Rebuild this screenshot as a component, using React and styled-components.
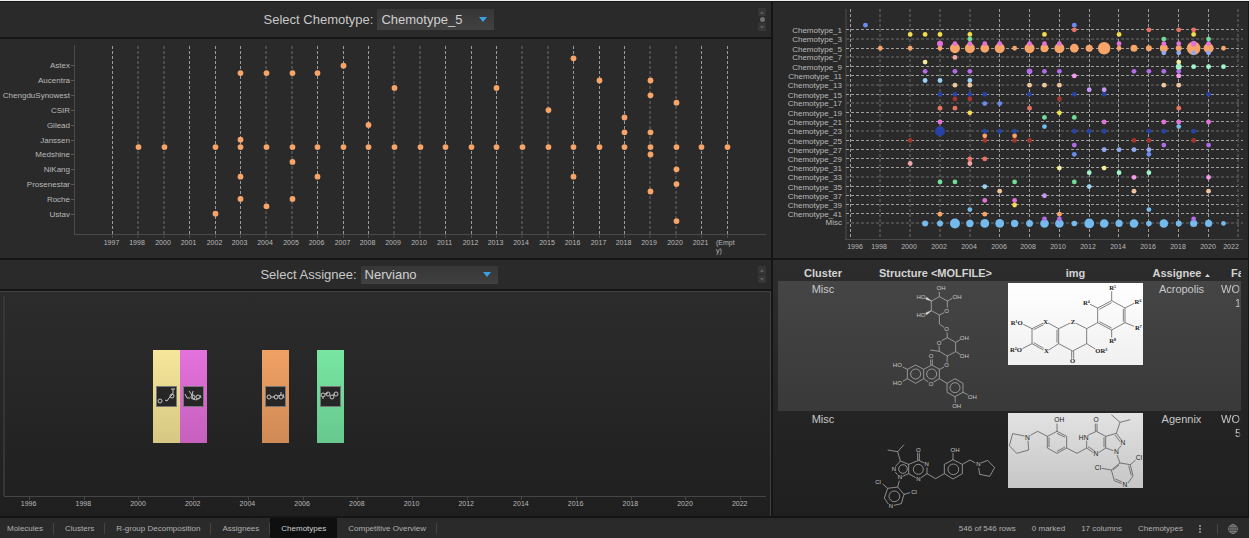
import React from "react";
import styled, { createGlobalStyle } from "styled-components";

const assigneeRows = [
  "Astex",
  "Aucentra",
  "ChengduSynowest",
  "CSIR",
  "Gilead",
  "Janssen",
  "Medshine",
  "NiKang",
  "Prosenestar",
  "Roche",
  "Ustav",
];

// whole numbers fall between two pixels and get the wide, dim line
const assigneeCols = [
  ["1997", 112.5],
  ["1998", 138],
  ["2000", 164],
  ["2001", 189.5],
  ["2002", 215.5],
  ["2003", 240.5],
  ["2004", 266],
  ["2005", 292],
  ["2006", 317.5],
  ["2007", 343.5],
  ["2008", 368.5],
  ["2009", 394],
  ["2010", 420],
  ["2011", 445.5],
  ["2012", 471.5],
  ["2013", 496.5],
  ["2014", 522],
  ["2015", 548],
  ["2016", 573.5],
  ["2017", 599.5],
  ["2018", 624.5],
  ["2019", 650],
  ["2020", 676],
  ["2021", 701.5],
  ["Empty", 727.5],
];

// one entry for each half row, from the top
const assigneeDots = [
  "2016",
  "2007",
  "2003 2004 2005 2006",
  "2017 2019",
  "2009 2013",
  "2019",
  "2020",
  "2015",
  "2018",
  "2008",
  "2018 2019",
  "2003",
  "1998 2000 2002 2003 2004 2005 2006 2007 2008 2009 2010 2011 2012 2013 2014 2015 2016 2017 2018 2019 2020 2021 Empty",
  "2019",
  "2005",
  "2020",
  "2003 2006 2016",
  "2020",
  "2019",
  "2003 2005",
  "2004",
  "2002",
  "2020",
];

const c = {
  orange: "#f7a468",
  blue: "#6b8bf0",
  red: "#ea7262",
  yellow: "#f3dc50",
  green: "#72de9a",
  magenta: "#e272da",
  peri: "#92a8f2",
  rose: "#f2a6a6",
  paleYellow: "#f5ec98",
  mint: "#a2f5ca",
  purple: "#b56cea",
  pink: "#f29cea",
  lightBlue: "#9ad2f5",
  peach: "#f2c49c",
  lilac: "#c598f2",
  navy: "#2843a6",
  brick: "#a3352b",
  sky: "#74baec",
};

const chemotypeCols = [
  [1996, 77.5, 82],
  [1998, 107, 106],
  [2000, 137, 136],
  [2002, 167, 166],
  [2004, 197, 196],
  [2006, 226.5, 226],
  [2008, 256.5, 255],
  [2010, 286.5, 285],
  [2012, 316.5, 315],
  [2014, 345.5, 345],
  [2016, 375.5, 375],
  [2018, 405.5, 405],
  [2020, 435.5, 435],
  [2022, 465, 458],
];

const chemotypeRows = [
  27.5, 37, 46.5, 55, 64.5, 73.5, 83, 92.5, 101, 110.5, 119.5, 129, 138.5,
  147.5, 156.5, 165.5, 175, 184.5, 193.5, 202.5, 211.5, 221,
];

// [row, colour, years], a year is "yy" or "yy:radius"
const chemotypeDots = [
  [5, c.orange, "98 00 02 03:5 04:5 05:4.4 06:5 07 08:5 09:4 10:5 11:4.4 12:3.6 13:6.2 14 15:3.5 16:3 17:4 18:3 19:6.8 20:5 21"],
  [43, c.sky, "01:3 02:3 03:5 04:3.7 05:4.4 06:4.4 07:3.7 08:3.4 09:4.3 10:4.3 11:2.8 12:4.9 13:4.3 14:3.6 15:4.3 16:2.8 17:4.3 18:3 19:3.6 20:3.6 21"],
  [0, c.blue, "97 11"],
  [1, c.red, "11 16 18 19"],
  [2, c.yellow, "00 01 02 04 09 14 19"],
  [3, c.green, "04 17 20"],
  [4, c.magenta, "02:3 03 04 05 06 08 09 10 14 17 18 19:2.8 20"],
  [6, c.peri, "17 18 19 20"],
  [7, c.rose, "03"],
  [8, c.paleYellow, "01 18"],
  [10, c.purple, "01 03 04 08:2.8 09 10 15 16 17 18"],
  [9, c.mint, "18:3 19 20 21"],
  [11, c.pink, "11 18"],
  [12, c.lightBlue, "01 02 04"],
  [13, c.peach, "03 04 08 09 10 17 18"],
  [14, c.lilac, "12 13"],
  [15, c.navy, "02 03 04 05 08 11 13 20"],
  [16, c.brick, "03 04 10"],
  [17, c.blue, "05 06"],
  [18, c.red, "02 03 08 18"],
  [19, c.yellow, "04 10"],
  [20, c.green, "09 11"],
  [21, c.magenta, "02 13 17 18 20"],
  [22, c.sky, "09 18"],
  [23, c.navy, "02:5 05 06 07 11 12 13 16 17 19"],
  [24, c.orange, "05 07"],
  [25, c.brick, "00 05 07 08 15 16 19"],
  [26, c.purple, "11 17 20"],
  [27, c.peri, "13 14 15 16"],
  [28, c.blue, "11 16"],
  [29, c.red, "04 05"],
  [30, c.rose, "00 04"],
  [31, c.paleYellow, "10 13"],
  [32, c.mint, "12 14 16"],
  [33, c.pink, "15 20"],
  [34, c.green, "02 03 07 11"],
  [35, c.lightBlue, "05 12"],
  [36, c.peach, "06 15 20"],
  [37, c.lilac, "09"],
  [38, c.magenta, "05 07"],
  [39, c.yellow, "07"],
  [40, c.sky, "04 16"],
  [41, c.orange, "02 05 10"],
  [42, c.purple, "09 10 19"],
];

const bars = [
  {
    x: 153,
    from: "#f6e69a",
    to: "#d6c883",
    d: "M6 15h0M9 14l2 1 2-3M13 12l3-3 1-2M15 3h4M17 3v4",
    rings: [[4, 15], [16, 10]],
  },
  {
    x: 180,
    from: "#e472dc",
    to: "#c660bd",
    d: "M2 8l2 4h3M6 5l3 4 1-4M9 9l1 4 3 1 3-2M17 9l1 3",
    rings: [[10, 11], [15, 11]],
  },
  {
    x: 262,
    from: "#f0a165",
    to: "#d08a55",
    d: "M6 11h4M13 10l3-1M16 6v3M18 8l1 4",
    rings: [[4, 11], [11, 11], [16, 11]],
  },
  {
    x: 317,
    from: "#78e6a2",
    to: "#67c88e",
    d: "M3 10v3M5 8l3-1M13 9l2-1",
    rings: [[3, 9], [8, 8], [12, 11], [16, 8]],
  },
];

const App = () => {
  return (
    <>
      <GlobalStyle />
      <Page>
        <Panels>
          <Column>
            <SelectBar
              id="chemotype"
              label="Select Chemotype:"
              value="Chemotype_5"
              width={117}
              thumb
            />
            <Panel>
              <AssigneeChart />
            </Panel>
          </Column>
          <Panel>
            <ChemotypeChart />
          </Panel>
          <Column>
            <SelectBar
              id="assignee"
              label="Select Assignee:"
              value="Nerviano"
              width={137}
            />
            <Panel $framed>
              <TimelineChart />
            </Panel>
          </Column>
          <Panel $shaded>
            <StructureTable />
          </Panel>
        </Panels>
        <StatusBar />
      </Page>
    </>
  );
};

const SelectBar = ({ id, label, value, width, thumb }) => (
  <Bar $tall={thumb}>
    <BarMain>
      <label htmlFor={id}>{label}</label>
      <SelectBox $width={width} $tall={thumb}>
        <select id={id} defaultValue={value}>
          <option>{value}</option>
        </select>
        <svg width="8" height="5" viewBox="0 0 8 5">
          <path d="M0 0h8L4 5z" fill="#3aa0e6" />
        </svg>
      </SelectBox>
    </BarMain>
    <Stepper>
      <button type="button" aria-label="Previous">
        <svg width="4" height="3" viewBox="0 0 4 3">
          <path d="M0 3L2 0l2 3z" />
        </svg>
      </button>
      {thumb && <Thumb />}
      <button type="button" aria-label="Next">
        <svg width="4" height="3" viewBox="0 0 4 3">
          <path d="M0 0h4L2 3z" />
        </svg>
      </button>
    </Stepper>
  </Bar>
);

const GridLine = ({ x, y, from, to }) => {
  const wide = Number.isInteger(x ?? y);
  const ends =
    x !== undefined
      ? { x1: x, x2: x, y1: from, y2: to }
      : { x1: from, x2: to, y1: y, y2: y };
  return (
    <line
      {...ends}
      stroke={wide ? "#4b4b4b" : "#9c9c9c"}
      strokeWidth={wide ? 2 : 1}
      strokeDasharray="3 2"
    />
  );
};

const AssigneeChart = () => {
  const colX = Object.fromEntries(assigneeCols);
  return (
    <Chart viewBox="0 0 771 219" role="img" aria-label="Assignees by year">
      <path d="M74.5 6v189.500H766" fill="none" stroke="#4a4a4a" />
      {assigneeCols.map(([year, x]) => (
        <g key={year}>
          <GridLine x={x} from={7} to={195} />
          <path d={`M${x} 196v3`} stroke="#4a4a4a" />
          {year === "Empty" ? (
            <text x="716" y="206">
              (Empt
              <tspan x="716" dy="8">
                y)
              </tspan>
            </text>
          ) : (
            <text x={x - 1} y="206" textAnchor="middle">
              {year}
            </text>
          )}
        </g>
      ))}
      {assigneeRows.map((name, i) => {
        const y = 26.4 + i * 14.84;
        return (
          <g key={name}>
            <path d={`M71 ${Math.round(y)}.5h3`} stroke="#5a5a5a" />
            <RowLabel x="70" y={y + 3} textAnchor="end">
              {name}
            </RowLabel>
          </g>
        );
      })}
      {assigneeDots.map((years, i) =>
        years
          .split(" ")
          .map((year) => (
            <circle
              key={i + year}
              cx={Math.floor(colX[year]) + 0.5}
              cy={19.3 + i * 7.4}
              r="2.9"
              fill={c.orange}
            />
          ))
      )}
    </Chart>
  );
};

const ChemotypeChart = () => (
  <Chart viewBox="0 0 475 256" role="img" aria-label="Chemotypes by year">
    <path d="M73 7v230" stroke="#3c3c3c" strokeWidth="2" />
    <path d="M72 237.500H470" stroke="#4a4a4a" />
    {chemotypeRows.map((y, i) => (
      <g key={y}>
        <GridLine y={y} from={73} to={470} />
        <RowLabel x="69" y={y + (i === 21 ? 2 : 3)} textAnchor="end">
          {i === 21 ? "Misc" : `Chemotype_${i * 2 + 1}`}
        </RowLabel>
      </g>
    ))}
    {chemotypeCols.map(([year, x, labelX]) => (
      <g key={year}>
        <GridLine x={x} from={7} to={237} />
        <text x={labelX} y="247" textAnchor="middle">
          {year}
        </text>
      </g>
    ))}
    {chemotypeDots.map(([row, fill, years]) =>
      years.split(" ").map((item) => {
        const [yy, r = 2.4] = item.split(":");
        const offset = yy > 90 ? yy - 96 : Number(yy) + 4;
        return (
          <circle
            key={row + item}
            cx={77.5 + offset * 14.92}
            cy={23.2 + row * 4.61}
            r={r}
            fill={fill}
          />
        );
      })
    )}
  </Chart>
);

const TimelineChart = () => (
  <Chart viewBox="0 0 770 223" role="img" aria-label="Structures by year">
    <path d="M4 4v200" stroke="#363636" strokeWidth="2" />
    <path d="M4 204.500H766" stroke="#454545" />
    {Array.from({ length: 14 }, (_, i) => (
      <g key={i}>
        <path
          d={`M${Math.round(29 + i * 54.7)}.5 205v3`}
          stroke="#454545"
        />
        <text x={28.6 + i * 54.7} y="214" textAnchor="middle">
          {1996 + i * 2}
        </text>
      </g>
    ))}
    {bars.map(({ x, from, to, d, rings }) => (
      <g key={x}>
        <linearGradient id={`bar${x}`} x2="0" y2="1">
          <stop stopColor={from} />
          <stop offset="1" stopColor={to} />
        </linearGradient>
        <rect x={x} y="58" width="27" height="93" fill={`url(#bar${x})`} />
        <svg x={x + 3} y="94" width="21" height="21">
          <rect
            x="0.5"
            y="0.5"
            width="20"
            height="20"
            fill="#262626"
            stroke="#777"
          />
          <g fill="none" stroke="#c4c4c4">
            <path d={d} />
            {rings.map(([cx, cy]) => (
              <circle key={cx} cx={cx} cy={cy} r="2" />
            ))}
          </g>
        </svg>
      </g>
    ))}
  </Chart>
);

const Atoms = ({ items }) =>
  items.map(([text, x, y]) => (
    <text key={text + x + y} x={x} y={y + 6} textAnchor="middle">
      {text}
    </text>
  ));

const Glycoside = () => (
  <Molecule viewBox="294 63 405 387" $height={129}>
    <path d="M508 107L532 120V140M522 155L508 162 484 149V120L508 107V92M532 120L547 112M508 162V189L522 199M531 214L532 230 557 244V272L532 285 508 271 507 254M515 239L532 230M508 271L481 267M557 244L571 236M557 272L571 280M532 285L531 304M522 318L509 325 485 312 461 325V353L475 363M491 363L508 353V325M482 312V295M487 312V295M461 325L437 312 412 325V353L437 367 461 353M412 325L398 318M412 353L398 361M508 353L531 367 555 353 579 367V394L555 407 531 394V367M579 394L593 401M555 407L556 425" />
    <path d="M484 120L470 109 467 114zM484 149L467 156 470 161z" fill="#eee" />
    <circle cx="437" cy="339" r="15" />
    <circle cx="485" cy="339" r="15" />
    <circle cx="555" cy="380" r="15" />
    <Atoms
      items={[
        ["OH", 513, 82],
        ["HO", 453, 109],
        ["OH", 561, 109],
        ["O", 530, 149],
        ["HO", 453, 163],
        ["O", 530, 204],
        ["OH", 583, 231],
        ["O", 507, 245],
        ["OH", 583, 285],
        ["O", 483, 286],
        ["O", 530, 313],
        ["HO", 382, 313],
        ["HO", 382, 367],
        ["O", 483, 368],
        ["OH", 607, 407],
        ["OH", 560, 435],
      ]}
    />
  </Molecule>
);

const Pyrazole = () => (
  <Molecule viewBox="294 33 405 312" $height={104}>
    <path d="M353 147L383 152 402 131M383 152L391 180 416 190V218L398 226M382 221L376 213M376 197L391 180M416 190L446 178 463 186M471 199V218L453 230M437 230L416 218M443 178V155M448 178V155M471 218L497 233 523 218V190L549 176 577 190V218L549 234 523 218M549 176V156M577 190L600 177 616 186M633 186L653 178 674 200 659 226 629 220 626 200M388 239L383 258 402 280 394 308 372 313M355 309L343 291 353 262 383 258M353 262L338 249M402 280L420 275" />
    <circle cx="399" cy="204" r="13" />
    <circle cx="445" cy="205" r="15" />
    <circle cx="550" cy="205" r="16" />
    <circle cx="373" cy="286" r="16" />
    <Atoms
      items={[
        ["O", 445, 146],
        ["N", 470, 190],
        ["N", 372, 205],
        ["N", 390, 229],
        ["N", 445, 235],
        ["OH", 555, 146],
        ["N", 625, 190],
        ["Cl", 324, 242],
        ["Cl", 432, 272],
        ["N", 363, 315],
      ]}
    />
  </Molecule>
);

const ScaffoldImage = () => (
  <Picture viewBox="24 68 405 246" $height={82} $serif>
    <path d="M130 188L96 205V250L130 269M131 193L101 208M101 247L131 264M144 188L176 205V250L146 269M171 208V247M176 205L211 188M227 188L260 205V250L218 272 176 250M215 272V295M221 272V295M260 250L286 266M96 205L70 192M96 250L67 265M260 205L293 187V143L335 121 375 143V187L335 209 293 187M298 147L335 127M370 146V184M335 203L298 184M335 121V93M293 143L270 132M375 143L402 129M375 187L402 198M335 209V232" />
    <Atoms
      items={[
        ["R¹O", 50, 189],
        ["R²O", 48, 269],
        ["X", 137, 185],
        ["X", 139, 273],
        ["Z", 219, 184],
        ["O", 218, 303],
        ["OR³", 304, 272],
        ["R⁴", 259, 128],
        ["R⁵", 338, 84],
        ["R⁶", 414, 125],
        ["R⁷", 415, 202],
        ["R⁸", 338, 243],
      ]}
    />
  </Picture>
);

const InhibitorImage = () => (
  <Picture viewBox="24 37 405 225" $height={75} $dim>
    <path d="M74 106L38 99 28 135 50 158 86 148 84 120M91 104L113 92 142 107 171 92 200 107V142L171 158 142 142V107M147 110V139M171 98L195 110M195 139L171 152M171 92V69M200 142L231 158 260 142 280 156M264 138L284 151M260 142V120M265 103L289 92 317 107V142L296 156M312 110V139M286 92V69M291 92V69M317 107L349 98 364 118M345 103L360 123M364 135L355 145M340 150L317 142M349 98L360 65 334 42M360 65L391 57M351 163L360 187 334 208 343 240 365 249M346 235L367 244M357 193L339 208M384 247L399 226 391 192 360 187M394 224L386 195M334 208L305 203M391 192L407 178" />
    <Atoms
      items={[
        ["N", 82, 111],
        ["OH", 178, 59],
        ["O", 288, 59],
        ["HN", 251, 111],
        ["N", 288, 161],
        ["N", 369, 127],
        ["N", 349, 154],
        ["Cl", 294, 202],
        ["Cl", 417, 172],
        ["N", 375, 252],
      ]}
    />
  </Picture>
);

const StructureTable = () => (
  <TableWrap>
    <Table>
      <colgroup>
        <Col $width={90} />
        <Col />
        <Col $width={145} />
        <Col $width={67} />
        <Col $width={26} />
      </colgroup>
      <thead>
        <tr>
          <th>Cluster</th>
          <th>Structure &lt;MOLFILE&gt;</th>
          <th>img</th>
          <th>
            Assignee
            <SortMark viewBox="0 0 5 3">
              <path d="M0 3l2.500-3L5 3z" />
            </SortMark>
          </th>
          <th>
            <Indent>Fa</Indent>
          </th>
        </tr>
      </thead>
      <tbody>
        <Row $selected>
          <td>Misc</td>
          <td>
            <Glycoside />
          </td>
          <td>
            <ScaffoldImage />
          </td>
          <td>Acropolis</td>
          <td>
            WO2<Indent>1</Indent>
          </td>
        </Row>
        <Row>
          <td>Misc</td>
          <td>
            <Pyrazole />
          </td>
          <td>
            <InhibitorImage />
          </td>
          <td>Agennix</td>
          <td>
            WO2<Indent>5</Indent>
          </td>
        </Row>
      </tbody>
    </Table>
  </TableWrap>
);

const StatusBar = () => (
  <Footer>
    <Tabs>
      <Tab type="button">Molecules</Tab>
      <Tab type="button">Clusters</Tab>
      <Tab type="button">R-group Decomposition</Tab>
      <Tab type="button">Assignees</Tab>
      <Tab type="button" $active>
        Chemotypes
      </Tab>
      <Tab type="button">Competitive Overview</Tab>
    </Tabs>
    <Status>
      <span>546 of 546 rows</span>
      <span>0 marked</span>
      <span>17 columns</span>
      <span>Chemotypes</span>
      <IconButton type="button" aria-label="More">
        <svg width="2" height="8" viewBox="0 0 2 8" fill="#808080">
          <path d="M0 0h2v2H0zM0 3h2v2H0zM0 6h2v2H0z" />
        </svg>
      </IconButton>
      <Language>
        <IconButton type="button" aria-label="Language">
          <svg
            width="10"
            height="10"
            viewBox="0 0 10 10"
            fill="none"
            stroke="#858585"
            strokeWidth="0.8"
          >
            <circle cx="5" cy="5" r="4.5" />
            <ellipse cx="5" cy="5" rx="2.2" ry="4.5" />
            <path d="M5 0v10M0.500 5h9M1.200 2.600h7.600M1.200 7.400h7.600" />
          </svg>
        </IconButton>
      </Language>
    </Status>
  </Footer>
);

const GlobalStyle = createGlobalStyle`
  * {
    box-sizing: border-box;
  }
  body {
    margin: 0;
    background: #151515;
    color: #c8c8c8;
    font-family: "Liberation Sans", Arial, sans-serif;
  }
  button, select {
    font-family: inherit;
    margin: 0;
    border: 0;
  }
`;

const Page = styled.div`
  display: flex;
  flex-direction: column;
  min-height: 100vh;
  border-top: 1px solid #f0f0f0;
  padding-top: 1px;
`;

const Panels = styled.main`
  display: grid;
  flex: 1;
  grid-template-columns: minmax(0, 771fr) minmax(0, 475fr);
  gap: 2px;
  padding: 0 1px 2px 0;
`;

const Column = styled.section`
  display: flex;
  flex-direction: column;
  gap: 2px;
`;

const Panel = styled.section`
  flex: 1;
  background: ${({ $framed, $shaded }) =>
    $framed || $shaded
      ? "linear-gradient(#2c2c2c, #1f1f1f)"
      : "#2a2a2a"};
  border: solid #414141;
  border-width: ${({ $framed }) => ($framed ? "1px 1px 0 0" : 0)};
`;

const Bar = styled.div`
  display: flex;
  align-items: center;
  height: ${({ $tall }) => ($tall ? 35 : 29)}px;
  padding-right: 5px;
  background: #2a2a2a;
`;

const BarMain = styled.div`
  display: flex;
  flex: 1;
  align-items: center;
  justify-content: center;
  gap: 4px;
  font-size: 13px;
`;

const SelectBox = styled.div`
  display: grid;
  align-items: center;
  width: ${({ $width }) => $width}px;
  height: ${({ $tall }) => ($tall ? 21 : 18)}px;
  background: linear-gradient(#363636, #414141);
  select,
  svg {
    grid-area: 1 / 1;
  }
  select {
    width: 100%;
    height: 100%;
    padding: 0 20px 0 4px;
    appearance: none;
    background: none;
    color: #d0d0d0;
    font-size: 13px;
  }
  svg {
    justify-self: end;
    margin-right: 7px;
    pointer-events: none;
  }
`;

const Stepper = styled.div`
  display: flex;
  flex-direction: column;
  align-items: center;
  gap: 1px;
  button {
    display: flex;
    align-items: center;
    justify-content: center;
    width: 8px;
    height: 8px;
    padding: 0;
    background: #363636;
  }
  path {
    fill: #5c5c5c;
  }
`;

const Thumb = styled.span`
  width: 5px;
  height: 5px;
  border-radius: 50%;
  background: #707070;
`;

const Chart = styled.svg`
  display: block;
  width: 100%;
  height: auto;
  text {
    fill: #b9b9b9;
    font-size: 7px;
  }
`;

const RowLabel = styled.text`
  && {
    font-size: 8px;
  }
`;

const TableWrap = styled.div`
  padding-top: 1px;
  padding-left: 5px;
  padding-right: 7px;
`;

const Table = styled.table`
  width: 100%;
  table-layout: fixed;
  border-collapse: collapse;
  font-size: 11px;
  line-height: 14px;
  text-align: center;
  th {
    padding: 5px 0 1px;
    overflow: hidden;
    white-space: nowrap;
    color: #d4d4d4;
  }
  td {
    padding: 1px 0 0;
    vertical-align: top;
  }
  td:last-child,
  th:last-child {
    overflow: hidden;
    text-align: left;
  }
  td:last-child {
    padding-left: 6px;
    mask-image: linear-gradient(to left, transparent, #000 3px);
  }
`;

const Col = styled.col`
  width: ${({ $width }) => ($width ? `${$width}px` : "auto")};
`;

const Row = styled.tr`
  background: ${({ $selected }) =>
    $selected ? "linear-gradient(#454545, #393939)" : "none"};
`;

const Indent = styled.span`
  display: block;
  padding-left: 16px;
  td & {
    padding-left: 14px;
  }
`;

const SortMark = styled.svg`
  width: 5px;
  height: 3px;
  margin-left: 4px;
  fill: #d4d4d4;
`;

const Molecule = styled.svg`
  display: block;
  width: 135px;
  height: ${({ $height }) => $height}px;
  margin: 0 auto;
  fill: none;
  stroke: #c2c2c2;
  stroke-width: 2;
  text {
    fill: #c8c8c8;
    stroke: none;
    font-size: 18px;
  }
`;

const Picture = styled(Molecule)`
  margin-top: 1px;
  background: ${({ $dim }) =>
    $dim
      ? "linear-gradient(#e2e2e2, #c6c6c6)"
      : "linear-gradient(#ffffff, #f0f0f0)"};
  stroke: #444;
  text {
    fill: #222;
    font-family: ${({ $serif }) =>
      $serif ? '"Liberation Serif", serif' : "inherit"};
    font-weight: ${({ $serif }) => ($serif ? "bold" : "normal")};
    font-size: 20px;
  }
`;

const Footer = styled.footer`
  display: flex;
  justify-content: space-between;
  height: 21px;
  background: #2a2a2a;
  color: #b0b0b0;
  font-size: 8px;
`;

const Tabs = styled.nav`
  display: flex;
`;

const Tab = styled.button`
  padding: 0 11px;
  background: ${({ $active }) =>
    $active
      ? "#0f0f0f"
      : "linear-gradient(#444, #444) right center / 1px 11px no-repeat"};
  color: ${({ $active }) => ($active ? "#d0d0d0" : "#b0b0b0")};
  font-size: 8px;
  &:first-child {
    padding-left: 7px;
  }
`;

const Status = styled.div`
  display: flex;
  align-items: center;
  gap: 16px;
  padding-right: 11px;
`;

const Language = styled.div`
  padding-left: 10px;
  border-left: 1px solid #444;
`;

const IconButton = styled.button`
  display: flex;
  padding: 0;
  background: none;
`;

export default App;
